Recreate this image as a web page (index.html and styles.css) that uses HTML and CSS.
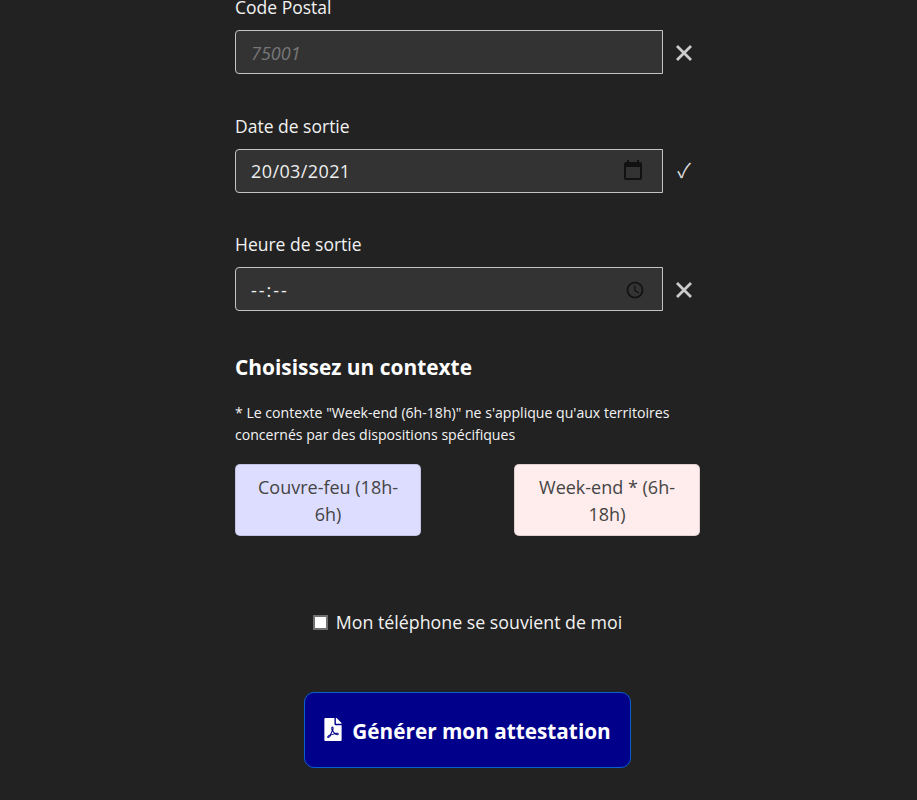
FILE: index.html
```html
<!DOCTYPE html>
<html lang="fr">
<head>
<meta charset="utf-8">
<title>Attestation</title>
<link rel="stylesheet" href="styles.css">
</head>
<body>
<main class="page">
  <form class="form">
    <div class="field">
      <label class="label" for="cp">Code Postal</label>
      <div class="row">
        <div class="control"><input class="input" id="cp" type="text" placeholder="75001"></div>
        <svg class="status cross" viewBox="0 -1 18 18" aria-hidden="true"><path d="M2 2 16 16M16 2 2 16"/></svg>
      </div>
    </div>
    <div class="field">
      <label class="label" for="date">Date de sortie</label>
      <div class="row">
        <div class="control">
          <input class="input date" id="date" type="text" value="20/03/2021">
          <svg class="picker" viewBox="0 0 24 24" aria-hidden="true"><path d="M19 3h-1V1h-2v2H8V1H6v2H5c-1.1 0-2 .9-2 2v14c0 1.1.9 2 2 2h14c1.1 0 2-.9 2-2V5c0-1.1-.9-2-2-2zm0 16H5V8h14v11z"/></svg>
        </div>
        <span class="status check">✓</span>
      </div>
    </div>
    <div class="field">
      <label class="label" for="time">Heure de sortie</label>
      <div class="row">
        <div class="control">
          <input class="input time" id="time" type="text" value="--:--">
          <svg class="picker clock" viewBox="0 0 24 24" aria-hidden="true"><path d="M11.99 2C6.47 2 2 6.48 2 12s4.47 10 9.99 10C17.52 22 22 17.52 22 12S17.52 2 11.99 2zM12 20c-4.42 0-8-3.58-8-8s3.58-8 8-8 8 3.58 8 8-3.58 8-8 8zm.5-13H11v6l5.25 3.15.75-1.23-4.5-2.67z"/></svg>
        </div>
        <svg class="status cross" viewBox="0 -1 18 18" aria-hidden="true"><path d="M2 2 16 16M16 2 2 16"/></svg>
      </div>
    </div>
    <h2 class="title">Choisissez un contexte</h2>
    <p class="note">* Le contexte "Week-end (6h-18h)" ne s'applique qu'aux territoires concernés par des dispositions spécifiques</p>
    <div class="choices">
      <button class="choice curfew" type="button">Couvre-feu (18h-6h)</button>
      <button class="choice weekend" type="button">Week-end * (6h-18h)</button>
    </div>
    <label class="remember"><input class="box" type="checkbox"><span>Mon téléphone se souvient de moi</span></label>
    <div class="submit-row">
      <button class="submit" type="button">
        <svg class="pdf" viewBox="0 0 384 512" aria-hidden="true"><path d="M181.9 256.1c-5-16-4.9-46.9-2-46.9 8.4 0 7.6 36.9 2 46.9zm-1.7 47.2c-7.7 20.2-17.3 43.3-28.4 62.7 18.3-7 39-17.2 62.9-21.9-12.7-9.6-24.9-23.4-34.5-40.8zM86.1 428.1c0 .8 13.2-5.4 34.9-40.2-6.7 6.3-29.1 24.5-34.9 40.2zM248 160h136v328c0 13.3-10.7 24-24 24H24c-13.3 0-24-10.7-24-24V24C0 10.7 10.7 0 24 0h200v136c0 13.2 10.8 24 24 24zm-8 171.8c-20-12.2-33.3-29-42.7-53.8 4.5-18.5 11.6-46.6 6.2-64.2-4.7-29.4-42.4-26.5-47.8-6.8-5 18.3-.4 44.1 8.1 77-11.6 27.6-28.7 64.6-40.8 85.8-.1 0-.1.1-.2.1-27.1 13.9-73.6 44.5-54.5 68 5.6 6.9 16 10 21.5 10 17.9 0 35.7-18 61.1-61.8 25.8-8.5 54.1-19.1 79-23.2 21.7 11.8 47.1 19.5 64 19.5 29.2 0 31.2-32 19.7-43.4-13.9-13.6-54.3-9.7-73.6-7.2zM377 105 279 7c-4.5-4.5-10.6-7-17-7h-6v128h128v-6.1c0-6.3-2.5-12.4-7-16.9zm-74.1 255.3c4.1-2.7-2.5-11.9-42.8-9 37.1 15.8 42.8 9 42.8 9z"/></svg>
        <span class="submit-text">Générer mon attestation</span>
      </button>
    </div>
  </form>
</main>
</body>
</html>
```
FILE: styles.css
```css
* { box-sizing: border-box; }
html, body { margin: 0; height: 800px; overflow: hidden; background: #222; }
body { color: #fff; font-family: "Open Sans", "Noto Sans", sans-serif; }
.page { padding-left: 235px; margin-top: -5px; }
.form { width: 465px; display: flex; flex-direction: column; }
.field { margin-bottom: 39.5px; }
.label { display: block; font-size: 17.5px; line-height: 24px; margin-bottom: 11px; color: #f2f2f2; }
.row { display: flex; align-items: center; }
.control { width: 428px; height: 44px; flex: none; display: flex; align-items: center; background: #333; border: 1px solid #c4c4c4; border-radius: 4px 0 0 4px; padding: 0 17px 0 15px; }
.input { flex: 1; min-width: 0; border: 0; padding: 2px 0 0; background: transparent; color: #eee; font: 18px "Open Sans", "Noto Sans", sans-serif; outline: none; }
.input::placeholder { color: #777; font-style: italic; opacity: 1; }
.date { letter-spacing: 0.4px; padding-top: 1px; }
.time { letter-spacing: 2px; padding-top: 1px; }
.picker { width: 24px; height: 24px; fill: #111; flex: none; }
.clock { width: 20px; height: 20px; margin-top: 1px; }
.status { flex: none; margin-left: 12px; }
.cross { width: 18px; height: 18px; stroke: #ccc; stroke-width: 2.8; fill: none; }
.check { width: 18px; padding-bottom: 1px; text-align: center; font-size: 20px; line-height: 24px; color: #ddd; font-family: "Noto Sans CJK JP", "DejaVu Sans", sans-serif; }
.title { margin: 1px 0 0; font-size: 20.9px; line-height: 30px; font-weight: 700; }
.note { margin: 20px 0 0; width: 445px; font-size: 14.1px; line-height: 22.5px; color: #f4f4f4; }
.choices { display: flex; justify-content: space-between; margin-top: 17px; }
.choice { width: 186px; height: 72px; border: 1px solid rgba(0, 0, 0, 0.12); border-radius: 5px; padding: 9px 12px 7px; font: 18px/27px "Open Sans", "Noto Sans", sans-serif; color: #444; }
.curfew { background: #ddf; }
.weekend { background: #ffecec; }
.remember { display: flex; align-items: center; justify-content: center; margin: 73px 0 0; width: 465px; font-size: 17.8px; line-height: 27px; color: #f2f2f2; }
.box { appearance: none; width: 15px; height: 15px; margin: 0 8px 0 0; background: #fff; border: 2px solid #707070; }
.submit-row { display: flex; justify-content: center; margin-top: 56px; }
.submit { width: 327px; height: 76px; background: #00008b; border: 1px solid #0a5fd0; border-radius: 10px; color: #fff; display: flex; align-items: center; justify-content: center; gap: 10px; font: 700 20.75px "Open Sans", "Noto Sans", sans-serif; }
.submit-text { padding-top: 3px; }
.pdf { width: 18px; height: 23px; fill: #fff; flex: none; }
```
